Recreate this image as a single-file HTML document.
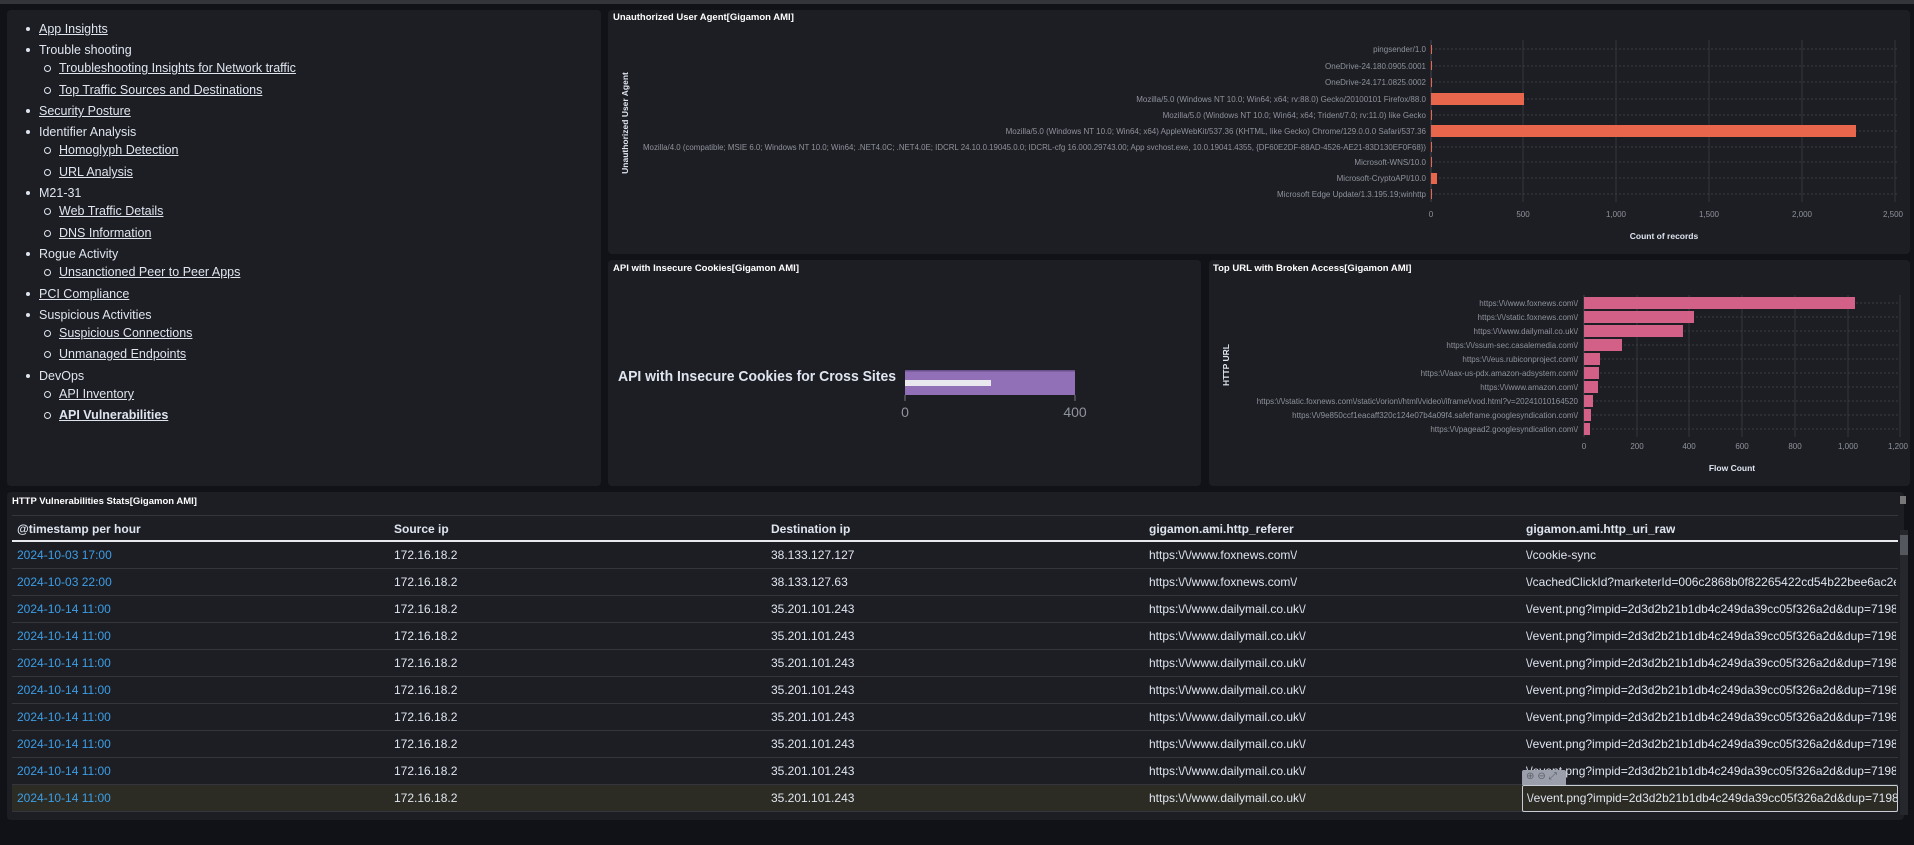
<!DOCTYPE html>
<html><head><meta charset="utf-8">
<style>
*{margin:0;padding:0;box-sizing:border-box}
body{width:1914px;height:845px;background:#111217;font-family:"Liberation Sans",sans-serif;position:relative;overflow:hidden;color:#dfe5ef}
.topbar{position:absolute;left:0;top:0;width:1914px;height:4px;background:#34353b}
.p{position:absolute;background:#1d1e24;border-radius:4px}
.t{position:absolute;font-size:9.5px;font-weight:bold;color:#fff;white-space:nowrap}
.nav{position:absolute;font-size:12.5px;color:#dfe5ef;white-space:nowrap}
.nav div{position:absolute;line-height:14px}
.nav .l{text-decoration:underline}
.nav .b1::before{content:"";position:absolute;left:-13px;top:5px;width:4px;height:4px;border-radius:50%;background:#dfe5ef}
.nav .b2::before{content:"";position:absolute;left:-15px;top:4px;width:5px;height:5px;border-radius:50%;border:1px solid #dfe5ef}
.cell{position:absolute;font-size:12px;white-space:nowrap;overflow:hidden;color:#dfe5ef}
.hd{font-weight:bold}
.ts{color:#3b9ee6}
.row{position:absolute;left:12px;width:1886px;height:27px;border-bottom:1px solid #34363d}
.u{width:370px}
</style></head><body>
<div class="topbar"></div>

<div class="p" style="left:7px;top:10px;width:594px;height:476px"></div>
<div class="p" style="left:608px;top:10px;width:1302px;height:244px"></div>
<div class="p" style="left:608px;top:260px;width:593px;height:226px"></div>
<div class="p" style="left:1209px;top:260px;width:701px;height:226px"></div>
<div class="p" style="left:7px;top:492px;width:1897px;height:328px"></div>

<div class="nav" style="left:0;top:0">
<div class="b1 l" style="left:39px;top:22px">App Insights</div>
<div class="b1" style="left:39px;top:43px">Trouble shooting</div>
<div class="b2 l" style="left:59px;top:61px">Troubleshooting Insights for Network traffic</div>
<div class="b2 l" style="left:59px;top:83px">Top Traffic Sources and Destinations</div>
<div class="b1 l" style="left:39px;top:104px">Security Posture</div>
<div class="b1" style="left:39px;top:125px">Identifier Analysis</div>
<div class="b2 l" style="left:59px;top:143px">Homoglyph Detection</div>
<div class="b2 l" style="left:59px;top:165px">URL Analysis</div>
<div class="b1" style="left:39px;top:186px">M21-31</div>
<div class="b2 l" style="left:59px;top:204px">Web Traffic Details</div>
<div class="b2 l" style="left:59px;top:226px">DNS Information</div>
<div class="b1" style="left:39px;top:247px">Rogue Activity</div>
<div class="b2 l" style="left:59px;top:265px">Unsanctioned Peer to Peer Apps</div>
<div class="b1 l" style="left:39px;top:287px">PCI Compliance</div>
<div class="b1" style="left:39px;top:308px">Suspicious Activities</div>
<div class="b2 l" style="left:59px;top:326px">Suspicious Connections</div>
<div class="b2 l" style="left:59px;top:347px">Unmanaged Endpoints</div>
<div class="b1" style="left:39px;top:369px">DevOps</div>
<div class="b2 l" style="left:59px;top:387px">API Inventory</div>
<div class="b2 l" style="left:59px;top:408px;font-weight:bold">API Vulnerabilities</div>
</div>

<div class="t" style="left:613px;top:12px">Unauthorized User Agent[Gigamon AMI]</div>
<div class="t" style="left:613px;top:263px">API with Insecure Cookies[Gigamon AMI]</div>
<div class="t" style="left:1213px;top:263px">Top URL with Broken Access[Gigamon AMI]</div>
<div class="t" style="left:12px;top:496px">HTTP Vulnerabilities Stats[Gigamon AMI]</div>

<svg width="1914" height="845" style="position:absolute;left:0;top:0" font-family="Liberation Sans, sans-serif">
<g stroke="#34363d" stroke-width="1">
<line x1="1523" y1="40" x2="1523" y2="202"/><line x1="1616" y1="40" x2="1616" y2="202"/><line x1="1709" y1="40" x2="1709" y2="202"/><line x1="1802" y1="40" x2="1802" y2="202"/><line x1="1895" y1="40" x2="1895" y2="202"/>
</g>
<g stroke="#3a3c44" stroke-width="1" stroke-dasharray="2,2">
<line x1="1431" y1="49" x2="1898" y2="49"/><line x1="1431" y1="66" x2="1898" y2="66"/><line x1="1431" y1="82" x2="1898" y2="82"/><line x1="1431" y1="99" x2="1898" y2="99"/><line x1="1431" y1="115" x2="1898" y2="115"/><line x1="1431" y1="131" x2="1898" y2="131"/><line x1="1431" y1="147" x2="1898" y2="147"/><line x1="1431" y1="162" x2="1898" y2="162"/><line x1="1431" y1="178" x2="1898" y2="178"/><line x1="1431" y1="194" x2="1898" y2="194"/>
</g>
<line x1="1431" y1="40" x2="1431" y2="202" stroke="#44464e"/>
<g fill="#e7664c">
<rect x="1431" y="45" width="1" height="9"/><rect x="1431" y="61" width="1" height="9"/><rect x="1431" y="78" width="1" height="9"/>
<rect x="1431" y="93" width="93" height="12"/><rect x="1431" y="110" width="1" height="10"/>
<rect x="1431" y="125" width="425" height="12"/><rect x="1431" y="142" width="1" height="10"/>
<rect x="1431" y="157" width="1" height="10"/><rect x="1431" y="173" width="6" height="11"/><rect x="1431" y="189" width="1" height="10"/>
</g>
<g fill="#8f939c" font-size="8" text-anchor="end">
<text x="1426" y="52">pingsender/1.0</text>
<text x="1426" y="69">OneDrive-24.180.0905.0001</text>
<text x="1426" y="85">OneDrive-24.171.0825.0002</text>
<text x="1426" y="102">Mozilla/5.0 (Windows NT 10.0; Win64; x64; rv:88.0) Gecko/20100101 Firefox/88.0</text>
<text x="1426" y="118">Mozilla/5.0 (Windows NT 10.0; Win64; x64; Trident/7.0; rv:11.0) like Gecko</text>
<text x="1426" y="134">Mozilla/5.0 (Windows NT 10.0; Win64; x64) AppleWebKit/537.36 (KHTML, like Gecko) Chrome/129.0.0.0 Safari/537.36</text>
<text x="1426" y="150" textLength="783" lengthAdjust="spacingAndGlyphs">Mozilla/4.0 (compatible; MSIE 6.0; Windows NT 10.0; Win64; .NET4.0C; .NET4.0E; IDCRL 24.10.0.19045.0.0; IDCRL-cfg 16.000.29743.00; App svchost.exe, 10.0.19041.4355, {DF60E2DF-88AD-4526-AE21-83D130EF0F68})</text>
<text x="1426" y="165">Microsoft-WNS/10.0</text>
<text x="1426" y="181">Microsoft-CryptoAPI/10.0</text>
<text x="1426" y="197">Microsoft Edge Update/1.3.195.19;winhttp</text>
</g>
<g fill="#8f939c" font-size="8" text-anchor="middle">
<text x="1431" y="217">0</text><text x="1523" y="217">500</text><text x="1616" y="217">1,000</text><text x="1709" y="217">1,500</text><text x="1802" y="217">2,000</text><text x="1893" y="217">2,500</text>
</g>
<text x="1664" y="239" fill="#dfe5ef" font-size="8.5" font-weight="bold" text-anchor="middle">Count of records</text>
<text transform="translate(628,123) rotate(-90)" fill="#dfe5ef" font-size="8.5" font-weight="bold" text-anchor="middle">Unauthorized User Agent</text>

<text x="618" y="381" fill="#dfe5ef" font-size="15" font-weight="bold" textLength="278" lengthAdjust="spacingAndGlyphs">API with Insecure Cookies for Cross Sites</text>
<rect x="905" y="370" width="170" height="25" fill="#9170b8"/>
<rect x="905" y="370" width="170" height="1.5" fill="#6a4f8c"/>
<rect x="905" y="380" width="86" height="6" fill="#e8e8ee"/>
<line x1="905" y1="395" x2="905" y2="401" stroke="#777"/><line x1="1075" y1="395" x2="1075" y2="401" stroke="#777"/>
<text x="905" y="417" fill="#8f939c" font-size="14" text-anchor="middle">0</text>
<text x="1075" y="417" fill="#8f939c" font-size="14" text-anchor="middle">400</text>

<g stroke="#34363d">
<line x1="1637" y1="295" x2="1637" y2="437"/><line x1="1689" y1="295" x2="1689" y2="437"/><line x1="1742" y1="295" x2="1742" y2="437"/><line x1="1795" y1="295" x2="1795" y2="437"/><line x1="1848" y1="295" x2="1848" y2="437"/><line x1="1900" y1="295" x2="1900" y2="437"/>
</g>
<g stroke="#3a3c44" stroke-dasharray="2,2">
<line x1="1584" y1="303" x2="1900" y2="303"/><line x1="1584" y1="317" x2="1900" y2="317"/><line x1="1584" y1="331" x2="1900" y2="331"/><line x1="1584" y1="345" x2="1900" y2="345"/><line x1="1584" y1="359" x2="1900" y2="359"/><line x1="1584" y1="373" x2="1900" y2="373"/><line x1="1584" y1="387" x2="1900" y2="387"/><line x1="1584" y1="401" x2="1900" y2="401"/><line x1="1584" y1="415" x2="1900" y2="415"/><line x1="1584" y1="429" x2="1900" y2="429"/>
</g>
<line x1="1584" y1="295" x2="1584" y2="437" stroke="#44464e"/>
<g fill="#d36086">
<rect x="1584" y="297" width="271" height="12"/><rect x="1584" y="311" width="110" height="12"/><rect x="1584" y="325" width="99" height="12"/><rect x="1584" y="339" width="38" height="12"/><rect x="1584" y="353" width="16" height="12"/><rect x="1584" y="367" width="15" height="12"/><rect x="1584" y="381" width="14" height="12"/><rect x="1584" y="395" width="9" height="12"/><rect x="1584" y="409" width="7" height="12"/><rect x="1584" y="423" width="6" height="12"/>
</g>
<g fill="#8f939c" font-size="8" text-anchor="end">
<text x="1578" y="306">https:\/\/www.foxnews.com\/</text>
<text x="1578" y="320">https:\/\/static.foxnews.com\/</text>
<text x="1578" y="334">https:\/\/www.dailymail.co.uk\/</text>
<text x="1578" y="348">https:\/\/ssum-sec.casalemedia.com\/</text>
<text x="1578" y="362">https:\/\/eus.rubiconproject.com\/</text>
<text x="1578" y="376">https:\/\/aax-us-pdx.amazon-adsystem.com\/</text>
<text x="1578" y="390">https:\/\/www.amazon.com\/</text>
<text x="1578" y="404">https:\/\/static.foxnews.com\/static\/orion\/html\/video\/iframe\/vod.html?v=20241010164520</text>
<text x="1578" y="418">https:\/\/9e850ccf1eacaff320c124e07b4a09f4.safeframe.googlesyndication.com\/</text>
<text x="1578" y="432">https:\/\/pagead2.googlesyndication.com\/</text>
</g>
<g fill="#8f939c" font-size="8" text-anchor="middle">
<text x="1584" y="449">0</text><text x="1637" y="449">200</text><text x="1689" y="449">400</text><text x="1742" y="449">600</text><text x="1795" y="449">800</text><text x="1848" y="449">1,000</text><text x="1898" y="449">1,200</text>
</g>
<text x="1732" y="471" fill="#dfe5ef" font-size="8.5" font-weight="bold" text-anchor="middle">Flow Count</text>
<text transform="translate(1229,365) rotate(-90)" fill="#dfe5ef" font-size="8.5" font-weight="bold" text-anchor="middle">HTTP URL</text>
</svg>

<div style="position:absolute;left:12px;top:515px;width:1886px;height:1px;background:#34363d"></div>
<div style="position:absolute;left:12px;top:540px;width:1886px;height:2px;background:#e8e8ee"></div>
<div class="cell hd" style="left:17px;top:522px">@timestamp per hour</div>
<div class="cell hd" style="left:394px;top:522px">Source ip</div>
<div class="cell hd" style="left:771px;top:522px">Destination ip</div>
<div class="cell hd" style="left:1149px;top:522px">gigamon.ami.http_referer</div>
<div class="cell hd" style="left:1526px;top:522px">gigamon.ami.http_uri_raw</div>

<div class="row" style="top:542px"></div><div class="row" style="top:569px"></div><div class="row" style="top:596px"></div><div class="row" style="top:623px"></div><div class="row" style="top:650px"></div><div class="row" style="top:677px"></div><div class="row" style="top:704px"></div><div class="row" style="top:731px"></div><div class="row" style="top:758px"></div>
<div class="row" style="top:785px;background:#2c2c25"></div>

<div class="cell ts" style="left:17px;top:548px">2024-10-03 17:00</div><div class="cell" style="left:394px;top:548px">172.16.18.2</div><div class="cell" style="left:771px;top:548px">38.133.127.127</div><div class="cell" style="left:1149px;top:548px">https:\/\/www.foxnews.com\/</div><div class="cell u" style="left:1526px;top:548px">\/cookie-sync</div>
<div class="cell ts" style="left:17px;top:575px">2024-10-03 22:00</div><div class="cell" style="left:394px;top:575px">172.16.18.2</div><div class="cell" style="left:771px;top:575px">38.133.127.63</div><div class="cell" style="left:1149px;top:575px">https:\/\/www.foxnews.com\/</div><div class="cell u" style="left:1526px;top:575px">\/cachedClickId?marketerId=006c2868b0f82265422cd54b22bee6ac2e</div>
<div class="cell ts" style="left:17px;top:602px">2024-10-14 11:00</div><div class="cell" style="left:394px;top:602px">172.16.18.2</div><div class="cell" style="left:771px;top:602px">35.201.101.243</div><div class="cell" style="left:1149px;top:602px">https:\/\/www.dailymail.co.uk\/</div><div class="cell u" style="left:1526px;top:602px">\/event.png?impid=2d3d2b21b1db4c249da39cc05f326a2d&amp;dup=71980</div>
<div class="cell ts" style="left:17px;top:629px">2024-10-14 11:00</div><div class="cell" style="left:394px;top:629px">172.16.18.2</div><div class="cell" style="left:771px;top:629px">35.201.101.243</div><div class="cell" style="left:1149px;top:629px">https:\/\/www.dailymail.co.uk\/</div><div class="cell u" style="left:1526px;top:629px">\/event.png?impid=2d3d2b21b1db4c249da39cc05f326a2d&amp;dup=71980</div>
<div class="cell ts" style="left:17px;top:656px">2024-10-14 11:00</div><div class="cell" style="left:394px;top:656px">172.16.18.2</div><div class="cell" style="left:771px;top:656px">35.201.101.243</div><div class="cell" style="left:1149px;top:656px">https:\/\/www.dailymail.co.uk\/</div><div class="cell u" style="left:1526px;top:656px">\/event.png?impid=2d3d2b21b1db4c249da39cc05f326a2d&amp;dup=71980</div>
<div class="cell ts" style="left:17px;top:683px">2024-10-14 11:00</div><div class="cell" style="left:394px;top:683px">172.16.18.2</div><div class="cell" style="left:771px;top:683px">35.201.101.243</div><div class="cell" style="left:1149px;top:683px">https:\/\/www.dailymail.co.uk\/</div><div class="cell u" style="left:1526px;top:683px">\/event.png?impid=2d3d2b21b1db4c249da39cc05f326a2d&amp;dup=71980</div>
<div class="cell ts" style="left:17px;top:710px">2024-10-14 11:00</div><div class="cell" style="left:394px;top:710px">172.16.18.2</div><div class="cell" style="left:771px;top:710px">35.201.101.243</div><div class="cell" style="left:1149px;top:710px">https:\/\/www.dailymail.co.uk\/</div><div class="cell u" style="left:1526px;top:710px">\/event.png?impid=2d3d2b21b1db4c249da39cc05f326a2d&amp;dup=71980</div>
<div class="cell ts" style="left:17px;top:737px">2024-10-14 11:00</div><div class="cell" style="left:394px;top:737px">172.16.18.2</div><div class="cell" style="left:771px;top:737px">35.201.101.243</div><div class="cell" style="left:1149px;top:737px">https:\/\/www.dailymail.co.uk\/</div><div class="cell u" style="left:1526px;top:737px">\/event.png?impid=2d3d2b21b1db4c249da39cc05f326a2d&amp;dup=71980</div>
<div class="cell ts" style="left:17px;top:764px">2024-10-14 11:00</div><div class="cell" style="left:394px;top:764px">172.16.18.2</div><div class="cell" style="left:771px;top:764px">35.201.101.243</div><div class="cell" style="left:1149px;top:764px">https:\/\/www.dailymail.co.uk\/</div><div class="cell u" style="left:1526px;top:764px">\/event.png?impid=2d3d2b21b1db4c249da39cc05f326a2d&amp;dup=71980</div>
<div class="cell ts" style="left:17px;top:791px">2024-10-14 11:00</div><div class="cell" style="left:394px;top:791px">172.16.18.2</div><div class="cell" style="left:771px;top:791px">35.201.101.243</div><div class="cell" style="left:1149px;top:791px">https:\/\/www.dailymail.co.uk\/</div>
<div class="cell" style="left:1522px;top:785px;width:376px;height:27px;border:1px solid #c8ccd4;border-radius:2px;padding:5px 0 0 4px">\/event.png?impid=2d3d2b21b1db4c249da39cc05f326a2d&amp;dup=71980</div>
<div style="position:absolute;left:1522px;top:770px;width:44px;height:15px;background:#9a9fab;border-radius:2px 2px 0 0;font-size:10px;color:#5a5e68;padding:1px 0 0 4px;letter-spacing:3px">⊕⊖⤢</div>

<div style="position:absolute;left:1900px;top:530px;width:8px;height:285px;background:#26272d"></div>
<div style="position:absolute;left:1900px;top:535px;width:8px;height:20px;background:#55575e"></div>
<div style="position:absolute;left:1900px;top:496px;width:6px;height:8px;background:#777"></div>
</body></html>
